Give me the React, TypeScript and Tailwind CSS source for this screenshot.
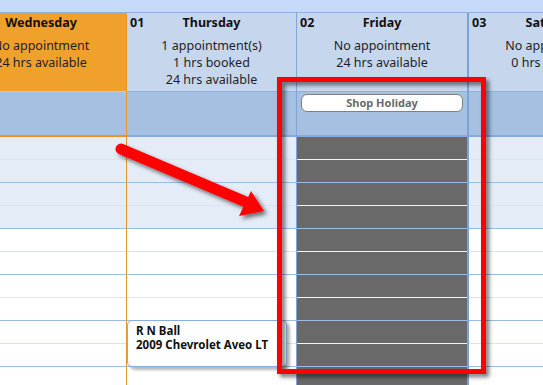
import React from "react";

type Col = {
  num?: string;
  day: string;
  lines: string[];
  orange?: boolean;
  gray?: boolean;
  holiday?: boolean;
  card?: boolean;
  width: string;
};

const cols: Col[] = [
  { num: "", day: "Wednesday", lines: ["No appointment", "24 hrs available"], orange: true, width: "w-[171px]" },
  { num: "01", day: "Thursday", lines: ["1 appointment(s)", "1 hrs booked", "24 hrs available"], card: true, width: "w-[170px]" },
  { num: "02", day: "Friday", lines: ["No appointment", "24 hrs available"], gray: true, holiday: true, width: "w-[172px]" },
  { num: "03", day: "Saturday", lines: ["No appointment", "0 hrs available"], width: "w-[170px]" },
];

const slots = Array.from({ length: 11 }, (_, i) => i);

function Column({ c }: { c: Col }) {
  const rightBorder = c.orange
    ? "border-r border-r-[#e6962a]"
    : c.gray
    ? "border-r-2 border-r-[#7ca3d8]"
    : "border-r border-r-[#7fa6da]";
  return (
    <div className={`flex flex-col shrink-0 ${c.width} ${rightBorder}`}>
      <div
        className={`h-[79px] pt-[2px] border-b ${
          c.orange ? "bg-[#f0a12b] border-b-[#d9c7a6]" : "bg-[#c6d6ec] border-b-[#8fb2de]"
        }`}
      >
        <div className="grid grid-cols-[30px_1fr_30px] h-[16px] leading-[16px] text-[12.5px] font-bold text-[#111]">
          <span className="pl-[3px]">{c.num}</span>
          <span className="text-center">{c.day}</span>
          <span />
        </div>
        <div className="mt-[6px] flex flex-col items-center text-[12.5px] leading-[17px] text-[#1e1e2a]">
          {c.lines.map((l) => (
            <span key={l} className="whitespace-nowrap">{l}</span>
          ))}
        </div>
      </div>
      <div
        className={`h-[45px] bg-[#a6c0e2] border-b-2 ${
          c.orange ? "border-b-[#ec9423]" : "border-b-[#86aadc]"
        } px-[4px] pt-[2px]`}
      >
        {c.holiday && (
          <div className="h-[18px] rounded-[6px] border border-[#808080] bg-white flex items-center justify-center text-[11px] font-bold text-[#6a6a6a]">
            Shop Holiday
          </div>
        )}
      </div>
      <div className="relative flex flex-col">
        {slots.map((i) => {
          const odd = i % 2 === 0;
          const bg = c.gray ? "bg-[#696969]" : i < 4 ? "bg-[#e4ecf7]" : "bg-white";
          const line = c.gray
            ? odd
              ? "border-b-[#f4f4f4]"
              : "border-b-[#9dbde6]"
            : odd
            ? "border-b-[#dde4ef]"
            : "border-b-[#9ebde6]";
          return <div key={i} className={`h-[23px] border-b ${bg} ${line}`} />;
        })}
        {c.card && (
          <div className="absolute left-0 top-[183px] w-[160px] h-[47px] bg-white border border-[#8aaee0] rounded-[5px] shadow-[3px_3px_3px_rgba(0,0,0,0.28)] pl-[8px] pt-[3px] text-[11.5px] leading-[14px] font-bold text-[#111]">
            <div>R N Ball</div>
            <div className="whitespace-nowrap">2009 Chevrolet Aveo LT</div>
          </div>
        )}
      </div>
    </div>
  );
}

export default function App() {
  return (
    <div
      className="relative w-[543px] h-[385px] overflow-hidden bg-white"
      style={{ fontFamily: '"Noto Sans", "Open Sans", sans-serif' }}
    >
      <div className="h-[13px] bg-[#c4daf8] border-b border-b-[#8db0dd]" />
      <div className="flex -ml-[44px]">
        {cols.map((c) => (
          <Column key={c.day} c={c} />
        ))}
      </div>
      <svg className="absolute inset-0 pointer-events-none" width="543" height="385" viewBox="0 0 543 385">
        <defs>
          <filter id="sh" x="-20%" y="-20%" width="140%" height="140%">
            <feDropShadow dx="3" dy="3" stdDeviation="2" floodColor="#000" floodOpacity="0.55" />
          </filter>
        </defs>
        <g filter="url(#sh)">
          <line x1="121" y1="149" x2="246" y2="202" stroke="#ff0000" strokeWidth="11" strokeLinecap="round" />
          <polygon points="264,211 251,191 239,216" fill="#ff0000" />
        </g>
        <rect x="279.5" y="79.5" width="204" height="292" fill="none" stroke="#ff0000" strokeWidth="5" filter="url(#sh)" />
      </svg>
    </div>
  );
}
